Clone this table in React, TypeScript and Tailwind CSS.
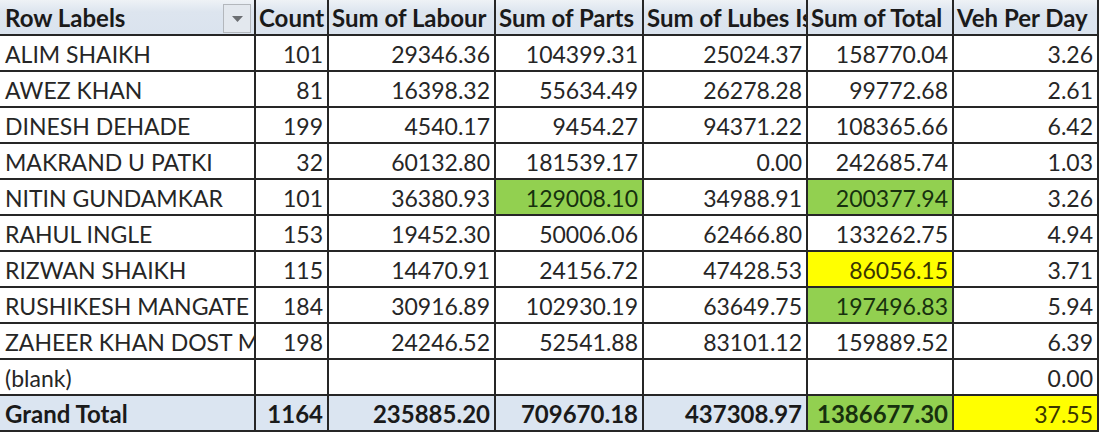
import React from "react";

type Row = {
  name: string;
  count: string;
  labour: string;
  parts: string;
  lubes: string;
  total: string;
  veh: string;
  partsBg?: string;
  totalBg?: string;
};

const rows: Row[] = [
  { name: "ALIM SHAIKH", count: "101", labour: "29346.36", parts: "104399.31", lubes: "25024.37", total: "158770.04", veh: "3.26" },
  { name: "AWEZ KHAN", count: "81", labour: "16398.32", parts: "55634.49", lubes: "26278.28", total: "99772.68", veh: "2.61" },
  { name: "DINESH DEHADE", count: "199", labour: "4540.17", parts: "9454.27", lubes: "94371.22", total: "108365.66", veh: "6.42" },
  { name: "MAKRAND U PATKI", count: "32", labour: "60132.80", parts: "181539.17", lubes: "0.00", total: "242685.74", veh: "1.03" },
  { name: "NITIN GUNDAMKAR", count: "101", labour: "36380.93", parts: "129008.10", lubes: "34988.91", total: "200377.94", veh: "3.26", partsBg: "green", totalBg: "green" },
  { name: "RAHUL INGLE", count: "153", labour: "19452.30", parts: "50006.06", lubes: "62466.80", total: "133262.75", veh: "4.94" },
  { name: "RIZWAN SHAIKH", count: "115", labour: "14470.91", parts: "24156.72", lubes: "47428.53", total: "86056.15", veh: "3.71", totalBg: "yellow" },
  { name: "RUSHIKESH MANGATE", count: "184", labour: "30916.89", parts: "102930.19", lubes: "63649.75", total: "197496.83", veh: "5.94", totalBg: "green" },
  { name: "ZAHEER KHAN DOST MOHAMMED", count: "198", labour: "24246.52", parts: "52541.88", lubes: "83101.12", total: "159889.52", veh: "6.39" },
  { name: "(blank)", count: "", labour: "", parts: "", lubes: "", total: "", veh: "0.00" },
];

const cellBase =
  "h-[36px] border-r-2 border-b-2 border-[#262626] overflow-hidden whitespace-nowrap flex items-center pt-[2px]";

const headBg =
  "bg-[linear-gradient(180deg,#eef2f6_0%,#dde5ef_35%,#dae3ee_100%)] text-[#1a1a1a] font-bold text-[24px]";

function Num({ v, bg }: { v: string; bg?: string }) {
  const bgCls =
    bg === "green"
      ? "bg-[#92d050] text-[#17300e]"
      : bg === "yellow"
      ? "bg-[#ffff00] text-[#3a3600]"
      : "";
  return <div className={`${cellBase} justify-end pr-[4px] ${bgCls}`}>{v}</div>;
}

export default function App() {
  return (
    <div
      className="w-[1100px] h-[432px] bg-white overflow-hidden text-[#262626] text-[23px] leading-none"
      style={{ fontFamily: "Lato, 'Noto Sans', sans-serif" }}
    >
      <div className="grid grid-cols-[256px_73px_167px_148px_164px_146px_145px]">
        <div className={`${cellBase} ${headBg} pl-[5px] relative`}>
          Row Labels
          <div className="absolute right-[3px] top-[4px] w-[28px] h-[29px] border border-[#b3b7bc] bg-[#e3e8ee] flex items-center justify-center">
            <svg width="11" height="6" viewBox="0 0 11 6">
              <polygon points="0,0 11,0 5.5,6" fill="#6b6e72" />
            </svg>
          </div>
        </div>
        {["Count", "Sum of Labour", "Sum of Parts", "Sum of Lubes Issued", "Sum of Total", "Veh Per Day"].map((h) => (
          <div key={h} className={`${cellBase} ${headBg} pl-[3px]`}>
            {h}
          </div>
        ))}

        {rows.map((r) => (
          <React.Fragment key={r.name}>
            <div className={`${cellBase} pl-[5px]`}>{r.name}</div>
            <Num v={r.count} />
            <Num v={r.labour} />
            <Num v={r.parts} bg={r.partsBg} />
            <Num v={r.lubes} />
            <Num v={r.total} bg={r.totalBg} />
            <Num v={r.veh} />
          </React.Fragment>
        ))}

        <div className={`${cellBase} pl-[5px] font-bold text-[24px] bg-[#dbe5f1] text-[#1a1a1a]`}>Grand Total</div>
        <div className={`${cellBase} justify-end pr-[4px] font-bold text-[24px] bg-[#dbe5f1] text-[#1a1a1a]`}>1164</div>
        <div className={`${cellBase} justify-end pr-[4px] font-bold text-[24px] bg-[#dbe5f1] text-[#1a1a1a]`}>235885.20</div>
        <div className={`${cellBase} justify-end pr-[4px] font-bold text-[24px] bg-[#dbe5f1] text-[#1a1a1a]`}>709670.18</div>
        <div className={`${cellBase} justify-end pr-[4px] font-bold text-[24px] bg-[#dbe5f1] text-[#1a1a1a]`}>437308.97</div>
        <div className={`${cellBase} justify-end pr-[4px] font-bold text-[24px] bg-[#92d050] text-[#17300e]`}>1386677.30</div>
        <div className={`${cellBase} justify-end pr-[4px] bg-[#ffff00] text-[#3a3600]`}>37.55</div>
      </div>
    </div>
  );
}
